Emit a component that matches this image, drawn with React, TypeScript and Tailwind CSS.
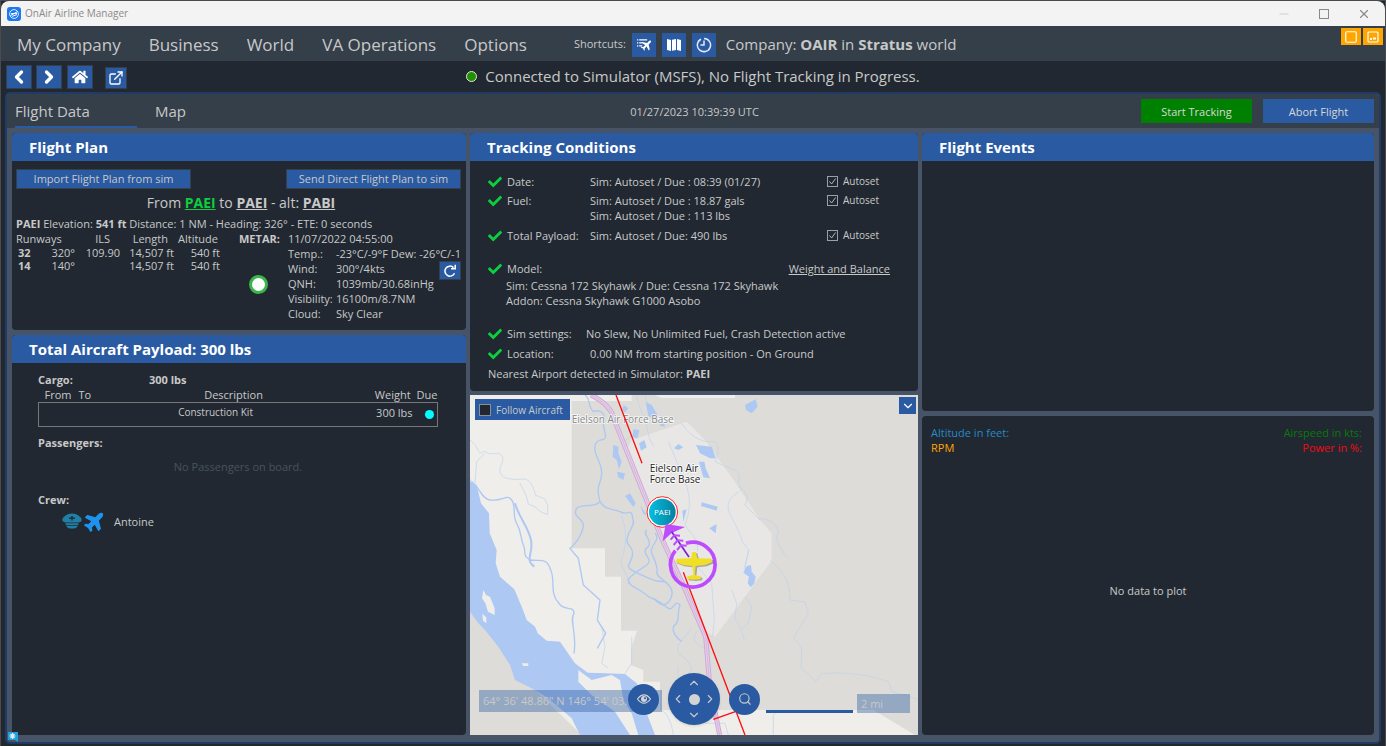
import { useState, type ReactNode } from "react";
import { ChevronDown, ChevronLeft, ChevronRight, ChevronUp, Minus, Search, Square, X } from "lucide-react";
import { FaCheck, FaHome, FaPlane } from "react-icons/fa";
import { FiExternalLink } from "react-icons/fi";
import { clsx } from "clsx";

const menuItems = ["My Company", "Business", "World", "VA Operations", "Options"];

const runways = [
  { id: "32", heading: "320°", ils: "109.90", length: "14,507 ft", altitude: "540 ft" },
  { id: "14", heading: "140°", ils: "", length: "14,507 ft", altitude: "540 ft" },
];

const metar = [
  ["Temp.:", "-23°C/-9°F Dew: -26°C/-1"],
  ["Wind:", "300°/4kts"],
  ["QNH:", "1039mb/30.68inHg"],
  ["Visibility:", "16100m/8.7NM"],
  ["Cloud:", "Sky Clear"],
];

interface PanelProps {
  title?: string;
  className?: string;
  children?: ReactNode;
}

function Panel({ title, className, children }: PanelProps) {
  return (
    <section className={clsx("flex flex-col overflow-hidden rounded-[4px] bg-[#212832]", className)}>
      {title && (
        <h2 className="h-7 shrink-0 bg-[#295aa2] px-[17px] text-[15px] leading-7 font-bold text-white">{title}</h2>
      )}
      {children}
    </section>
  );
}

function TitleBar() {
  return (
    <header className="flex h-[25px] shrink-0 items-center rounded-t-lg bg-[#f3f3f3] pl-1.5 text-[10px] text-[#8a8a8a]">
      <svg viewBox="0 0 14 14" className="mr-1 size-3.5">
        <rect width="14" height="14" rx="3" fill="#1b78f2" />
        <circle cx="7" cy="7" r="4.4" fill="none" stroke="#d9ecff" strokeWidth="1" />
        <path d="M3.4 8.6 10.6 4.6M4 6.6h6M5 9.4l5-1.8" stroke="#fff" strokeWidth="1" />
      </svg>
      <span className="flex-1">OnAir Airline Manager</span>
      <div className="flex items-center gap-7 pr-3.5">
        <button aria-label="Minimize"><Minus className="size-3.5 text-[#cfcfcf]" strokeWidth={2} /></button>
        <button aria-label="Maximize">
          <svg viewBox="0 0 10 10" className="size-2.5">
            <rect x=".5" y=".5" width="9" height="9" fill="none" stroke="#8a8a8a" />
          </svg>
        </button>
        <button aria-label="Close"><X className="size-3.5" strokeWidth={2} /></button>
      </div>
    </header>
  );
}

function FlightListIcon() {
  return (
    <svg viewBox="0 0 14 14" className="size-3.5">
      <path d="M0 1.800h1.300M0 4.800h1.300M0 7.800h1.300M2.200 1.800h8M2.200 4.800h2.600M2.200 7.800h3" stroke="#fff" strokeWidth="1.200" />
      <path d="M13.800 2.800c-.5-.5-1.300-.3-1.800.2l-1.900 1.900L5 3.900l-.9.900 4.100 2.200-2 2-1.700-.2-.7.700 2.200 1.100 1.100 2.200.7-.7-.2-1.700 2-2 2.200 4.100.9-.9-1-5.100 1.900-1.900c.5-.5.700-1.300.2-1.800Z" fill="#fff" />
    </svg>
  );
}

function MapStripsIcon() {
  return (
    <svg viewBox="0 0 14 14" className="size-3.5">
      <path d="M0 1l4 1v11l-4-1ZM5 1.800l4-.8v11l-4 .8ZM10 1l4 1v11l-4-1Z" fill="#fff" />
    </svg>
  );
}

function ClockIcon() {
  return (
    <svg viewBox="0 0 16 16" className="size-4" fill="none" stroke="#e4eaf4" strokeWidth="1.500">
      <path d="M5 2.100A6.600 6.600 0 1 0 8 1.400" />
      <path d="M8 3.500V8H4.500" />
      <path d="M2.600 4.300 4.700 2.300" />
    </svg>
  );
}

function MenuBar() {
  return (
    <div className="flex h-[35px] shrink-0 items-center bg-[#343f4a] pt-0.5 pl-4">
      <nav className="flex gap-7 text-[17px]">
        {menuItems.map((item) => (
          <a key={item} href="#">{item}</a>
        ))}
      </nav>
      <div className="ml-[47px] flex items-center gap-1.5">
        <span className="text-[11px]">Shortcuts:</span>
        <button aria-label="Flights" className="flex size-6 items-center justify-center bg-[#295aa2]"><FlightListIcon /></button>
        <button aria-label="Map" className="flex size-6 items-center justify-center bg-[#295aa2]"><MapStripsIcon /></button>
        <button aria-label="Schedule" className="flex size-6 items-center justify-center bg-[#295aa2]"><ClockIcon /></button>
      </div>
      <p className="ml-2.5 text-[15px]">
        Company: <b>OAIR</b> in <b>Stratus</b> world
      </p>
      <div className="ml-auto flex gap-0.5 self-start pr-0.5">
        <button aria-label="Window mode" className="flex h-[17px] w-5 items-center justify-center bg-[#ffa500]">
          <Square className="size-3.5 text-white" strokeWidth={2} />
        </button>
        <button aria-label="Compact mode" className="flex h-[17px] w-5 items-center justify-center bg-[#ffa500]">
          <svg viewBox="0 0 12 12" className="size-3">
            <rect x="1" y="1" width="10" height="10" rx="1" fill="none" stroke="#fff" strokeWidth="1.200" />
            <path d="M3 8h2M6 7.500h3" stroke="#fff" strokeWidth="2" />
          </svg>
        </button>
      </div>
    </div>
  );
}

const navButton = "flex items-center justify-center border border-[#343f4a] bg-[#295aa2] text-white";

function NavRow() {
  return (
    <div className="grid h-[31px] shrink-0 grid-cols-[1fr_auto_1fr] items-center px-[5px]">
      <div className="flex items-center gap-1">
        <button aria-label="Back" className={clsx(navButton, "h-6 w-[26px]")}><ChevronLeft className="size-5" strokeWidth={4} /></button>
        <button aria-label="Forward" className={clsx(navButton, "h-6 w-[26px]")}><ChevronRight className="size-5" strokeWidth={4} /></button>
        <button aria-label="Home" className={clsx(navButton, "ml-px h-6 w-[26px]")}><FaHome className="size-4" /></button>
        <button aria-label="Open in window" className={clsx(navButton, "mt-0.5 ml-2 size-[22px]")}><FiExternalLink className="size-4" /></button>
      </div>
      <p className="flex items-center gap-2 text-[15px]">
        <span className="size-[11px] rounded-full border border-[#dfe8d8] bg-[#219000]" />
        Connected to Simulator (MSFS), No Flight Tracking in Progress.
      </p>
    </div>
  );
}

function TabBar() {
  return (
    <div className="grid h-[34px] shrink-0 grid-cols-[1fr_auto_1fr] items-stretch rounded-t-[4px] bg-[#343f4a] pr-[5px] pl-2">
      <div role="tablist" className="flex text-[15px]">
        <button role="tab" aria-selected="true" className="w-[122px] border-b-2 border-[#295aa2] pt-0.5 text-left">Flight Data</button>
        <button role="tab" aria-selected="false" className="ml-[18px] border-b-2 border-transparent pt-0.5">Map</button>
      </div>
      <p className="self-center pt-0.5 text-[11px]">01/27/2023 10:39:39 UTC</p>
      <div className="flex items-center justify-end gap-[11px] text-[11px] text-[#d8d8d8]">
        <button className="h-6 w-[111px] bg-[#008000] pt-0.5">Start Tracking</button>
        <button className="h-6 w-[111px] bg-[#295aa2] pt-0.5">Abort Flight</button>
      </div>
    </div>
  );
}

function RefreshIcon() {
  return (
    <svg viewBox="0 0 14 14" className="size-3.5" fill="none" stroke="#fff" strokeWidth="1.500">
      <path d="M11.500 9.200A5 5 0 1 1 10.500 3.600" />
      <path d="M8 4.800h4.200V.8" />
    </svg>
  );
}

function FlightPlan() {
  return (
    <Panel title="Flight Plan" className="h-[197px] shrink-0">
      <div className="flex justify-between pt-2 pr-[5px] pl-1">
        <button className="h-5 w-[175px] border border-[#343f4a] bg-[#295aa2]">Import Flight Plan from sim</button>
        <button className="h-5 w-[175px] border border-[#343f4a] bg-[#295aa2]">Send Direct Flight Plan to sim</button>
      </div>
      <p className="mt-1 pl-1 text-center text-[14px] leading-5">
        From <a href="#" className="font-bold text-[#0ccf3f] underline">PAEI</a> to{" "}
        <a href="#" className="font-bold underline">PAEI</a> - alt: <a href="#" className="font-bold underline">PABI</a>
      </p>
      <p className="mt-[3px] pl-1 leading-[15px] whitespace-pre">
        <b>PAEI</b> Elevation: <b>541 ft</b> Distance: 1 NM - Heading: 326° - ETE: 0 seconds
      </p>
      <div className="flex pl-1">
        <table className="w-[204px] table-fixed self-start text-right leading-[13px]">
          <thead>
            <tr className="leading-[15px]">
              <th colSpan={2} className="w-[59px] text-left font-normal">Runways</th>
              <th className="w-[45px] pr-2.5 font-normal">ILS</th>
              <th className="w-[54px] pr-1.5 font-normal">Length</th>
              <th className="w-[46px] pr-0.5 font-normal">Altitude</th>
            </tr>
          </thead>
          <tbody>
            {runways.map((r) => (
              <tr key={r.id}>
                <td className="pl-0.5 text-left font-bold">{r.id}</td>
                <td>{r.heading}</td>
                <td>{r.ils}</td>
                <td>{r.length}</td>
                <td>{r.altitude}</td>
              </tr>
            ))}
          </tbody>
        </table>
        <div className="ml-[19px] w-[49px] shrink-0 leading-[15px]">
          <b>METAR:</b>
          <span className="mt-[29px] ml-[10px] block size-[19px] rounded-full border-[3px] border-[#39b54a] bg-white" />
        </div>
        <div className="relative min-w-0 flex-1 leading-[15px]">
          <p>11/07/2022 04:55:00</p>
          <dl className="grid grid-cols-[48px_1fr]">
            {metar.map(([label, value]) => (
              <div key={label} className="contents">
                <dt className="whitespace-nowrap">{label}</dt>
                <dd className="whitespace-nowrap">{value}</dd>
              </div>
            ))}
          </dl>
          <button aria-label="Refresh METAR" className={clsx(navButton, "absolute top-[30px] right-[5px] h-[19px] w-[22px]")}>
            <RefreshIcon />
          </button>
        </div>
      </div>
    </Panel>
  );
}

function Payload() {
  return (
    <Panel title="Total Aircraft Payload: 300 lbs" className="flex-1">
      <div className="pt-[9px] pr-7 pl-[26px] leading-[15px]">
        <p className="flex font-bold"><span className="w-[111px]">Cargo:</span>300 lbs</p>
        <table className="w-full border-collapse">
          <thead>
            <tr>
              <th className="w-[36px] pl-1.5 text-left font-normal">From</th>
              <th className="w-10 pl-1 text-left font-normal">To</th>
              <th className="font-normal">Description</th>
              <th className="w-[60px] pr-0.5 text-right font-normal">Weight</th>
              <th className="w-6 pl-1 text-left font-normal">Due</th>
            </tr>
          </thead>
          <tbody>
            <tr className="h-6 border border-[#777]">
              <td />
              <td />
              <td className="pr-9 text-center align-top text-[10px] leading-[18px]">Construction Kit</td>
              <td className="text-right align-top leading-5 whitespace-nowrap">300 lbs</td>
              <td className="pl-3"><span className="block size-[9px] rounded-full bg-[#00ffff]" /></td>
            </tr>
          </tbody>
        </table>
        <p className="mt-2 font-bold">Passengers:</p>
        <p className="mt-[9px] text-center text-[#48525e]">No Passengers on board.</p>
        <p className="mt-[18px] font-bold">Crew:</p>
        <div className="mt-[3px] flex items-center pl-6">
          <svg viewBox="0 0 20 16" className="mr-0.5 h-4 w-5 fill-[#207fa5]">
            <path d="M10 .5C5 .5.300 4 .300 7c0 1.500 2 2.200 3.200 2.500h13C18 9.200 19.700 8.500 19.700 7c0-3-4.700-6.500-9.700-6.500Z" />
            <path d="M3.500 10.300h13l-.3 1.600H3.800ZM4 12.700h12c-1 2-3 2.900-6 2.900s-5-.9-6-2.900Z" />
            <path d="M10 3v4.500M7 5.200h6" stroke="#212832" strokeWidth="1.300" />
          </svg>
          <FaPlane className="size-[22px] -rotate-45 text-[#1e93ee]" />
          <span className="ml-2">Antoine</span>
        </div>
      </div>
    </Panel>
  );
}

function Autoset() {
  return (
    <label className="relative flex w-[63px] items-center gap-[5px] text-[10px]">
      <input type="checkbox" defaultChecked className="peer size-[11px] appearance-none border border-[#9aa0a6]" />
      <svg viewBox="0 0 11 11" className="pointer-events-none absolute left-0 hidden size-[11px] peer-checked:block">
        <path d="M2.500 5.500 4.600 8l4-5.500" fill="none" stroke="#b4b8bc" />
      </svg>
      Autoset
    </label>
  );
}

interface ConditionProps {
  label: string;
  value?: string;
  wide?: boolean;
  children?: ReactNode;
}

function Condition({ label, value, wide, children }: ConditionProps) {
  return (
    <div className="flex h-[15px] items-center">
      <FaCheck className="mr-[5px] size-3.5 text-[#0ccf3f]" />
      <span className={clsx("shrink-0 whitespace-nowrap", wide ? "w-[79px]" : "w-[83px]")}>{label}</span>
      <span className="flex-1 whitespace-nowrap">{value}</span>
      {children}
    </div>
  );
}

function TrackingConditions() {
  return (
    <Panel title="Tracking Conditions" className="h-[258px] shrink-0">
      <div className="pt-[13px] pr-7 pl-[18px] leading-[15px]">
        <Condition label="Date:" value="Sim: Autoset / Due : 08:39 (01/27)"><Autoset /></Condition>
        <div className="mt-1">
          <Condition label="Fuel:" value="Sim: Autoset / Due : 18.87 gals"><Autoset /></Condition>
          <p className="pl-[102px]">Sim: Autoset / Due : 113 lbs</p>
        </div>
        <div className="mt-[5px]">
          <Condition label="Total Payload:" value="Sim: Autoset / Due: 490 lbs"><Autoset /></Condition>
        </div>
        <div className="mt-[18px]">
          <Condition label="Model:"><a href="#" className="underline">Weight and Balance</a></Condition>
          <p className="mt-0.5 pl-[18px]">Sim: Cessna 172 Skyhawk / Due: Cessna 172 Skyhawk</p>
          <p className="pl-[18px]">Addon: Cessna Skyhawk G1000 Asobo</p>
        </div>
        <div className="mt-[18px]">
          <Condition label="Sim settings:" value="No Slew, No Unlimited Fuel, Crash Detection active" wide />
        </div>
        <div className="mt-[5px]">
          <Condition label="Location:" value="0.00 NM from starting position - On Ground" />
        </div>
        <p className="mt-[5px]">Nearest Airport detected in Simulator: <b>PAEI</b></p>
      </div>
    </Panel>
  );
}

const lakes = [
  "840,45 872,28 878,50 860,70 843,60", "542,36 560,45 578,75 570,88 550,78", "476,45 490,55 480,67 472,60",
  "505,118 523,120 518,145 503,140", "522,160 538,150 545,172 528,182", "445,165 460,170 460,190 470,215 462,238 455,210 443,200",
  "456,245 480,250 475,270 460,262", "627,175 640,162 655,172 640,180", "693,165 740,170 752,205 735,205 705,190",
  "702,215 718,215 722,235 735,265 715,262", "710,337 758,350 755,362 708,348", "733,415 755,402 752,430",
  "480,318 495,310 512,340 505,352", "526,345 545,375 535,372", "652,362 665,358 655,395", "838,540 850,525 858,540",
  "590,75 600,110 585,108",
  "845,530 858,525 860,545 872,560 868,580 857,592 848,580 852,560 835,548",
];

const streams = [
  "M15 150c25 20 20 30 30 38 5 5 10-10 20 0s35-6 46 10c10 15-10 30-6 48 6 20 25 20 45 22 20 2 30-6 42 6 14 15 16 30 20 42l26 10 10 18v30l-20-8-16-14-22-10-6-24-20-40",
  "M30 280 15 268M30 280 35 215 60 190",
  "M515 15c5 40 25 60 30 90s10 50 22 65M540 15c6 25 10 40 30 50M650 100c20 30 50 60 100 55 15 10 10 40 0 60 40 20 60 20 70 35s-10 30 10 45l-4 10M820 290c20 10 35 30 20 55l45 45M820 306c-30 20-35 40-28 60s30 50 40 90l20 25-15 55",
  "M610 155c20 40 30 80 50 120 20 50 15 90 0 130 20 30 40 40 38 80M880 385c30 5 50 5 60 40-15 30 10 50 10 55l20 28M850 480l-10 60",
  "M915 510c30 30 60 50 60 120l45 6 10 35-44 72 24 30-2 60 45 42 18-24c60-5 120-2 200 24l10 30 80 24",
  "M800 600l15 40-5 45 20 35 8 30M840 620l20 30-10 50-18 15M690 520l50 60 8 110-5 50M700 720c-30 25 0 60 30 50M680 715l-40 50c-10 40 25 30 35 60 12 20-5 30-30 40",
  "M520 120 470 160M470 380c20 50 10 100 0 125s25 50 20 80M410 710l10 60-10 50 20 15M500 740l0 80-20 30M590 960c20 15 30 40 35 75M640 830l-5 100M720 1000l60 0 10 35M925 1035l0-60 15-15",
];

const channels = [
  "M360 15c20 15 5 30 25 50 25-10 40 10 30 35 0 25 20 50-10 50-25 10-15 40-5 60s15 40 5 65-5 40 0 60c15 25 35 20 60 30 25 15 35-15 38 20 10 20-12 35-15 55-10 25 15 25 15 50s-20 35-10 45 35 20 60 30 30 10 50 10",
  "M405 335c-20 20-55 5-70 20-15 25 20 30 20 50s-20 55-40 70l25 30 15 80 50 45-8 60 25 40-25 45",
  "M545 420c-15 15 20 30 5 50-30 20 20 35-5 55-20 15-50 30-55 45 0 20 35 25 60 50 30 10 40 20 60 35 15 10 20-30 35-10-10 25 0 35-10 55-25 15 0 45 15 55",
  "M570 430c20 20-20 40-10 60 10 20 20 45 15 60 10 20 25 20 40 40 15 20 0 50-20 55-20-5-20-15-30-20",
  "M15 275c30 10 30 50 60 55 40 5 50-20 65 0s0 40 15 70c15 25 10 40 20 65 10 20-5 30 20 45 30 5 50-10 62 30 15 30-5 70 25 100 15 25 45 5 45 30-15 20 10 60 0 120",
];

const road = "M378 15c30 15 65 40 72 80l80 200 60 150 60 130 72 165 12 145 30 150";

function ChartMap() {
  return (
    <svg viewBox="15 15 1344 1020" preserveAspectRatio="xMidYMid slice" className="absolute inset-0 size-full">
      <defs>
        <linearGradient id="airport">
          <stop stopColor="#05bfe0" />
          <stop offset="1" stopColor="#087f9f" />
        </linearGradient>
      </defs>
      <rect x="15" y="15" width="1344" height="1020" fill="#dddcd8" />
      <path fill="#efeeea" d="M15 15h485v18H320v442h100v85h48v162h48l-18 53v50l37 15v35h50v85h640l125 75H15Z" />
      <path fill="#efeeea" d="M570 15h240v9H590Z" />
      <path fill="#dddcd8" d="M15 660 180 870 350 1035H15Z" />
      <path fill="#e8e7e5" d="M500 150 635 105 665 95 720 150 820 290 885 390 920 430v82L750 740l-35-20L640 560 540 330 485 180Z" />
      <path fill="#adc8f2" d="M15 275 35 285 48 340 72 370 74 430 95 480 92 520 105 560 148 598 172 655 185 690 210 710 218 730 245 752 285 755 330 820 368 848 420 850 480 852 515 880 540 925 545 970 570 1035H345L320 985 285 955 250 925 200 895 150 870 135 825 100 770 60 720 40 700 15 665Z" />
      <path fill="#efeeea" d="m340 840 40 30 60-15 25 15 10 60 25 40 20 65h-25l-45-70-70-50-40-40ZM55 600l8 15 12 5 14 35v20l-20-10-8-25-10-15ZM52 672l12 10v18l-10-8ZM170 820h20v8h-15Z" />
      <g fill="none" stroke="#bed2ed" strokeWidth="2">{streams.map((d) => <path key={d} d={d} />)}</g>
      <g fill="none" stroke="#adc8f2" strokeWidth="4">{channels.map((d) => <path key={d} d={d} />)}</g>
      <path d="M150 340c10 40 40 70 48 110s-20 60 10 80" fill="none" stroke="#adc8f2" strokeWidth="6" />
      <g fill="#adc8f2">{lakes.map((p) => <polygon key={p} points={p} />)}</g>
      <path d={road} fill="none" stroke="#cfabd4" strokeWidth="15" />
      <path d={road} fill="none" stroke="#e5cfea" strokeWidth="9" />
      <path d={road} fill="none" stroke="#cfabd4" strokeWidth="2" />
      <g fontFamily="Open Sans, sans-serif" stroke="#fff" strokeOpacity=".8" strokeWidth="5" paintOrder="stroke">
        <text x="320" y="99" fontSize="30" fill="#87878a">Eielson Air Force Base</text>
        <text x="554" y="245" fontSize="30" fill="#222">Eielson Air</text>
        <text x="554" y="280" fontSize="30" fill="#222">Force Base</text>
      </g>
      <path d="m453 15 78 205M655 547l185 488M745 988l68-24" fill="none" stroke="#fe0d10" strokeWidth="4" />
      <circle cx="592" cy="366" r="46" fill="#fff" stroke="#fa2428" strokeWidth="3" />
      <circle cx="592" cy="366" r="40" fill="url(#airport)" />
      <text x="592" y="375" fontSize="24" fontFamily="Open Sans, sans-serif" fill="#fff" textAnchor="middle">PAEI</text>
      <path d="M663 460a67 67 0 1 1-32 22" fill="none" stroke="#bd4cff" strokeWidth="11" />
      <path d="m602 402 58 9-40 18-27 25Z" fill="#bd4cff" />
      <path d="m620 425 52 76" stroke="#7b1fd3" strokeWidth="5" />
      <path d="m617 449 11-13 17 1M626 465l12-14 17 1M636 480l12-14 17 1" fill="none" stroke="#bd4cff" strokeWidth="6" />
      <g transform="translate(688 524)">
        <path d="M-6-38h12l5 19 42 1 3 10-22 9-28 3-3 27 18 4v8l-20 2-21-2v-8l18-4-3-27-28-3-23-9 4-10 42-1Z" fill="#666" opacity=".5" transform="translate(3 4)" />
        <path d="M-6-38h10l5 19 42 1 3 10-22 9-28 3-3 27 18 4v8l-20 2-20-2v-8l18-4-3-27-28-3-22-9 4-10 42-1Z" fill="#f1df26" />
      </g>
    </svg>
  );
}

function MapPanel() {
  const [follow, setFollow] = useState(false);

  return (
    <section className="relative min-h-[340px] flex-1 overflow-hidden bg-[#dddcd8]">
      <ChartMap />
      <label className="absolute top-1 left-[5px] flex h-[21px] w-[95px] items-center gap-[5px] bg-[#295aa2] pt-px pl-1 text-[10px] whitespace-nowrap">
        <input
          type="checkbox"
          checked={follow}
          onChange={(e) => setFollow(e.target.checked)}
          className="size-3 shrink-0 appearance-none border border-[#8a8f96] bg-[#212832] checked:bg-[#0ccf3f]"
        />
        Follow Aircraft
      </label>
      <button aria-label="Map layers" className="absolute top-0.5 right-0.5 flex size-[17px] items-center justify-center bg-[#295aa2] text-white">
        <ChevronDown className="size-3.5" />
      </button>

      {/* Map controls */}
      <div className="absolute bottom-[23px] left-[9px] h-[22px] w-[183px] bg-[#295aa2]/40 pl-1 text-[11px] leading-[22px] whitespace-nowrap text-[#c8c8c8]">
        64° 36' 48.86" N 146° 54' 03.65"
      </div>
      <div className="absolute bottom-[10px] left-1/2 flex -translate-x-1/2 items-center gap-[9px]">
        <button aria-label="View" className="flex size-[31px] items-center justify-center rounded-full bg-[#295aa2]">
          <svg viewBox="0 0 14 10" className="h-2.5 w-3.5">
            <path d="M.5 5C3 1.600 5 .8 7 .8S11 1.600 13.500 5C11 8.400 9 9.200 7 9.200S3 8.400.5 5Z" fill="none" stroke="#d4d4d4" strokeWidth="1.200" />
            <circle cx="7" cy="5" r="3" fill="#d4d4d4" />
            <circle cx="8" cy="4.200" r="1" fill="#295aa2" />
          </svg>
        </button>
        <div className="grid size-[52px] grid-cols-3 grid-rows-3 place-items-center rounded-full bg-[#295aa2] p-0.5 shadow">
          <button aria-label="Pan up" className="col-start-2 row-start-1"><ChevronUp className="size-3.5" /></button>
          <button aria-label="Pan left" className="col-start-1 row-start-2"><ChevronLeft className="size-3.5" /></button>
          <button aria-label="Center" className="col-start-2 row-start-2 size-[11px] rounded-full bg-[#d4d4d4]" />
          <button aria-label="Pan right" className="col-start-3 row-start-2"><ChevronRight className="size-3.5" /></button>
          <button aria-label="Pan down" className="col-start-2 row-start-3"><ChevronDown className="size-3.5" /></button>
        </div>
        <button aria-label="Zoom" className="flex size-[31px] items-center justify-center rounded-full bg-[#295aa2]">
          <Search className="size-3.5" strokeWidth={2} />
        </button>
      </div>
      <div className="absolute right-2 bottom-[22px] flex items-end gap-1">
        <span className="h-[3px] w-[87px] bg-[#295aa2]" />
        <span className="h-[19px] w-[53px] bg-[#295aa2]/40 pl-1 text-[11px] leading-[19px]">2 mi</span>
      </div>
    </section>
  );
}

export default function App() {
  return (
    <div className="relative flex min-h-screen flex-col border border-b-2 border-[#4b4a4c] bg-[#212832] font-['Open_Sans','Noto_Sans',sans-serif] text-[11px] text-[#c8c8c8]">
      <TitleBar />
      <MenuBar />
      <NavRow />
      <main className="mx-1 mb-0.5 flex flex-1 flex-col rounded-[5px] border-2 border-[#203c66] bg-[#475366]">
        <TabBar />
        <div className="grid flex-1 grid-cols-[454fr_448fr_452fr] gap-1 p-[5px] pb-[7px]">
          <div className="flex min-w-0 flex-col gap-[5px]">
            <FlightPlan />
            <Payload />
          </div>
          <div className="flex min-w-0 flex-col gap-1">
            <TrackingConditions />
            <MapPanel />
          </div>
          <div className="flex min-w-0 flex-col gap-[5px]">
            <Panel title="Flight Events" className="h-[278px] shrink-0" />
            <Panel className="flex-1 px-[9px] pt-[9px]">
              <div className="flex justify-between leading-[15px]">
                <p className="text-[#258bc6]">Altitude in feet:<br /><span className="text-[#ffa500]">RPM</span></p>
                <p className="pr-[3px] text-right text-[#087a08]">Airspeed in kts:<br /><span className="text-[#f30812]">Power in %:</span></p>
              </div>
              <p className="flex flex-1 items-center justify-center pb-2">No data to plot</p>
            </Panel>
          </div>
        </div>
      </main>
      <svg viewBox="0 0 10 10" className="absolute bottom-1 left-[7px] size-2.5">
        <path d="M0 0h10v10L7 8H0Z" fill="#1ba0e0" />
        <path d="M4.500 1v6M1.500 4h6M2.500 2l4 4M6.500 2l-4 4" stroke="#e4e8ec" strokeWidth="1.200" />
      </svg>
    </div>
  );
}
